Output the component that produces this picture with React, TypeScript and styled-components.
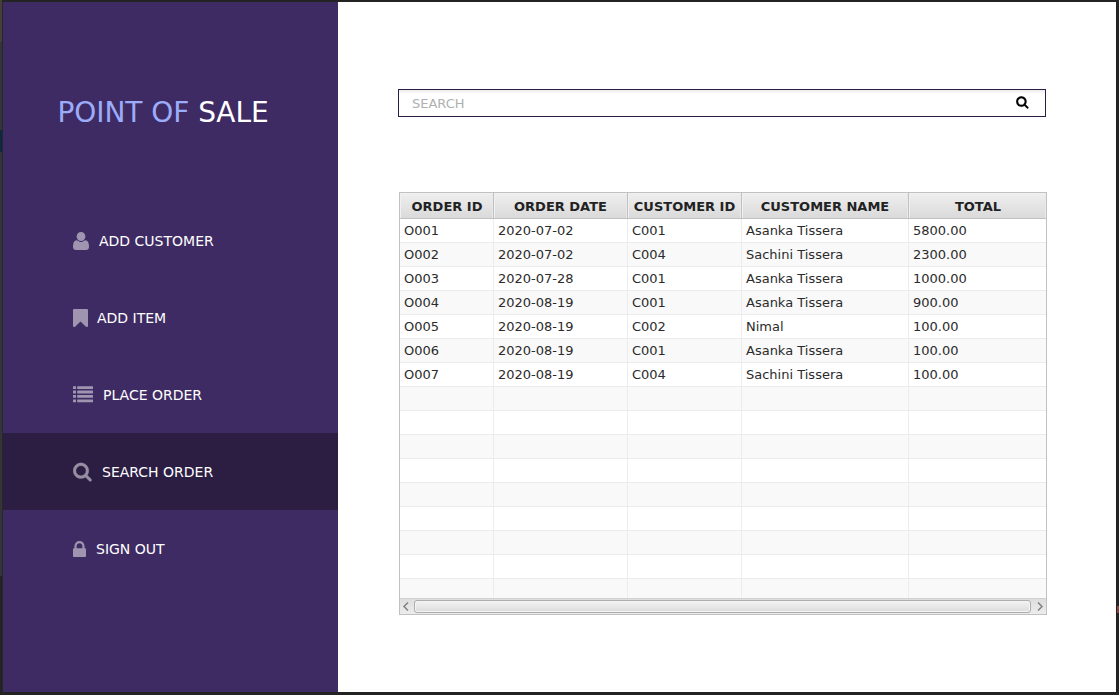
import React from "react";
import styled, { createGlobalStyle } from "styled-components";

const GlobalStyle = createGlobalStyle`
  * { box-sizing: border-box; }
  html, body { margin: 0; padding: 0; }
  body { background: #232323; font-family: "DejaVu Sans", sans-serif; overflow: hidden; }
`;

const Desktop = styled.div`
  display: flex;
  width: 1119px;
  height: 695px;
  background: #232323;
`;

const EdgeStrip = styled.div`
  display: flex;
  flex-direction: column;
  flex: none;
`;

const EdgeBlock = styled.div<{ $h: number; $w: number; $color: string; $inset?: number }>`
  flex: none;
  width: ${(p) => p.$w}px;
  height: ${(p) => p.$h}px;
  margin-left: ${(p) => p.$inset ?? 0}px;
  background: ${(p) => p.$color};
`;

const Window = styled.div`
  display: flex;
  flex: none;
  width: 1113px;
  height: 690px;
  margin-top: 2px;
  background: #fff;
`;

const Sidebar = styled.aside`
  width: 335px;
  flex: none;
  background: #3f2b63;
`;

const Title = styled.h1`
  margin: 0;
  height: 200px;
  padding: 94px 0 0 54.4px;
  font-size: 28px;
  font-weight: 400;
  line-height: 34px;
  letter-spacing: -0.05px;
  color: #9badfa;
  white-space: nowrap;
  span { color: #fff; }
`;

const MenuItem = styled.div<{ $active?: boolean }>`
  display: flex;
  align-items: center;
  height: 77px;
  padding-left: 70px;
  background: ${(p) => (p.$active ? "#2c1d43" : "transparent")};
  color: #fff;
  font-size: 14px;
  white-space: nowrap;
  svg { display: block; flex: none; fill: #fff; stroke: #fff; stroke-width: 0; opacity: 0.5; }
`;

const MenuLabel = styled.span<{ $gap: number }>`
  margin-left: ${(p) => p.$gap}px;
  line-height: 18px;
`;

const Content = styled.main`
  flex: 1;
  padding: 87px 0 0 60px;
`;

const SearchBox = styled.label`
  display: flex;
  align-items: center;
  justify-content: space-between;
  width: 648px;
  height: 28px;
  padding: 0 16px 0 13px;
  border: 1px solid #2c1d43;
  background: linear-gradient(#ececec, #fff 4px);
  svg { display: block; fill: #000; stroke: #000; margin-top: -2px; }
`;

const SearchInput = styled.input`
  flex: 1;
  padding: 0;
  border: 0;
  outline: 0;
  background: transparent;
  font: 13px "DejaVu Sans", sans-serif;
  &::placeholder { color: #b0b0b0; opacity: 1; }
`;

const Table = styled.div`
  display: flex;
  flex-direction: column;
  width: 648px;
  height: 423px;
  margin: 75px 0 0 1px;
  border: 1px solid #c1c1c1;
  overflow: hidden;
`;

const Row = styled.div<{ $odd?: boolean }>`
  display: grid;
  grid-template-columns: 94px 134px 114px 167px 137px;
  flex: none;
  height: 24px;
  background: ${(p) => (p.$odd ? "#f9f9f9" : "#fff")};
`;

const HeaderRow = styled(Row)`
  height: 26px;
  background: linear-gradient(#efefef, #d9d9d9);
`;

const HeaderCell = styled.div`
  display: flex;
  align-items: center;
  justify-content: center;
  border-right: 1px solid #c1c1c1;
  border-bottom: 1px solid #c1c1c1;
  box-shadow: inset 1px 1px 0 #f1f1f1, inset -1px 0 0 #e9e9e9;
  color: #222;
  font-size: 13px;
  font-weight: 700;
  white-space: nowrap;
  padding-top: 2px;
  &:first-child { padding-left: 1px; }
  &:last-child { border-right: 0; padding-left: 1px; }
`;

const Cell = styled.div`
  padding-left: 4px;
  border-right: 1px solid #ececec;
  border-bottom: 1px solid #ececec;
  color: #2b2b2b;
  font-size: 13px;
  line-height: 23px;
  white-space: nowrap;
  &:last-child { border-right: 0; }
`;

const Rows = styled.div`
  flex: 1;
  min-height: 0;
  overflow: hidden;
`;

const ScrollBar = styled.div`
  display: flex;
  align-items: center;
  flex: none;
  height: 16px;
  border-top: 1px solid #d0d0d0;
  background: linear-gradient(#dedede, #ececec);
  svg { display: block; flex: none; fill: none; stroke: #808080; stroke-width: 1.5; }
`;

const Thumb = styled.div`
  flex: 1;
  height: 13px;
  border: 1px solid #adadad;
  border-radius: 3px;
  background: linear-gradient(#f3f3f3, #dcdcdc);
  box-shadow: inset 0 0 0 1px #f4f4f4;
`;

const SEARCH =
  "M1216 832q0-185-131.5-316.5t-316.5-131.5-316.5 131.5-131.5 316.5 131.5 316.5 316.5 131.5 316.5-131.5 131.5-316.5zm512 832q0 52-38 90t-90 38q-54 0-90-38l-343-342q-179 124-399 124-143 0-273.5-55.5t-225-150-150-225-55.5-273.5 55.5-273.5 150-225 225-150 273.5-55.5 273.5 55.5 225 150 150 225 55.5 273.5q0 220-124 399l343 343q37 37 37 90z";
const USER =
  "M1600 1405q0 120-73 189.5t-194 69.5h-874q-121 0-194-69.5t-73-189.5q0-53 3.5-103.5t14-109 26.5-108.5 43-97.5 62-81 85.5-53.5 111.5-20q9 0 42 21.5t74.5 48 108 48 133.5 21.5 133.5-21.5 108-48 74.5-48 42-21.5q61 0 111.5 20t85.5 53.5 62 81 43 97.5 26.5 108.5 14 109 3.5 103.5zm-320-893q0 159-112.5 271.5t-271.5 112.5-271.5-112.5-112.5-271.5 112.5-271.5 271.5-112.5 271.5 112.5 112.5 271.5z";
const BOOKMARK =
  "M1420 128q23 0 44 9 33 13 52.5 41t19.5 62v1289q0 34-19.5 62t-52.5 41q-19 8-44 8-48 0-83-32l-441-424-441 424q-36 33-83 33-23 0-44-9-33-13-52.5-41t-19.5-62v-1289q0-34 19.5-62t52.5-41q21-9 44-9h1048z";
const LOCK =
  "M640 768h512v-192q0-106-75-181t-181-75-181 75-75 181v192zm832 96v576q0 40-28 68t-68 28h-960q-40 0-68-28t-28-68v-576q0-40 28-68t68-28h32v-192q0-184 132-316t316-132 316 132 132 316v192h32q40 0 68 28t28 68z";

const menu = [
  { label: "ADD CUSTOMER", gap: 10, icon: <svg width="16" height="18" viewBox="192 128 1408 1536" preserveAspectRatio="none"><path d={USER} /></svg> },
  { label: "ADD ITEM", gap: 9, icon: <svg width="15" height="18" viewBox="256 128 1280 1513" preserveAspectRatio="none"><path d={BOOKMARK} /></svg> },
  {
    label: "PLACE ORDER",
    gap: 10,
    icon: (
      <svg width="20" height="18" viewBox="0 0 20 18">
        {[0.2, 4.6, 9, 13.4].map((y) => (
          <g key={y}>
            <rect x="0" y={y} width="3" height="2.8" rx="0.3" />
            <rect x="4.2" y={y} width="15.8" height="2.8" rx="0.3" />
          </g>
        ))}
      </svg>
    ),
  },
  { label: "SEARCH ORDER", gap: 10, active: true, icon: <svg width="19" height="20" viewBox="54 50 1702 1792"><path d={SEARCH} strokeWidth="24" /></svg> },
  { label: "SIGN OUT", gap: 10, icon: <svg width="13" height="16" viewBox="320 128 1152 1408" preserveAspectRatio="none"><path d={LOCK} /></svg> },
];

const headers = ["ORDER ID", "ORDER DATE", "CUSTOMER ID", "CUSTOMER NAME", "TOTAL"];

const orders = [
  ["O001", "2020-07-02", "C001", "Asanka Tissera", "5800.00"],
  ["O002", "2020-07-02", "C004", "Sachini Tissera", "2300.00"],
  ["O003", "2020-07-28", "C001", "Asanka Tissera", "1000.00"],
  ["O004", "2020-08-19", "C001", "Asanka Tissera", "900.00"],
  ["O005", "2020-08-19", "C002", "Nimal", "100.00"],
  ["O006", "2020-08-19", "C001", "Asanka Tissera", "100.00"],
  ["O007", "2020-08-19", "C004", "Sachini Tissera", "100.00"],
];
const blank = ["", "", "", "", ""];
const rows = [...orders, ...Array.from({ length: 9 }, () => blank)];

export default function App() {
  return (
    <>
      <GlobalStyle />
      <Desktop>
        <EdgeStrip>
          <EdgeBlock $w={2} $h={42} $color="#454138" />
          <EdgeBlock $w={2} $h={88} $color="#333537" />
          <EdgeBlock $w={2} $h={22} $color="#0d293e" />
          <EdgeBlock $w={2} $h={424} $color="#343536" />
        </EdgeStrip>
        <EdgeBlock $w={1} $h={695} $color="#28262b" />
        <Window>
          <Sidebar>
            <Title>POINT OF <span>SALE</span></Title>
            {menu.map((m) => (
              <MenuItem key={m.label} $active={m.active}>
                {m.icon}
                <MenuLabel $gap={m.gap}>{m.label}</MenuLabel>
              </MenuItem>
            ))}
          </Sidebar>
          <Content>
            <SearchBox>
              <SearchInput placeholder="SEARCH" />
              <svg width="13" height="13" viewBox="40 80 1760 1760"><path d={SEARCH} strokeWidth="30" /></svg>
            </SearchBox>
            <Table>
              <HeaderRow>
                {headers.map((h) => <HeaderCell key={h}>{h}</HeaderCell>)}
              </HeaderRow>
              <Rows>
                {rows.map((r, i) => (
                  <Row key={i} $odd={i % 2 === 1}>
                    {r.map((c, j) => <Cell key={j}>{c}</Cell>)}
                  </Row>
                ))}
              </Rows>
              <ScrollBar>
                <svg width="14" height="15" viewBox="0 0 14 15"><path d="M8 3.5L4 7.5L8 11.5" /></svg>
                <Thumb />
                <svg width="15" height="15" viewBox="0 0 15 15"><path d="M7 3.5L11 7.5L7 11.5" /></svg>
              </ScrollBar>
            </Table>
          </Content>
        </Window>
        <EdgeStrip>
          <EdgeBlock $w={3} $h={606} $color="#232323" />
          <EdgeBlock $w={2} $h={7} $color="#933b39" $inset={1} />
        </EdgeStrip>
      </Desktop>
    </>
  );
}
